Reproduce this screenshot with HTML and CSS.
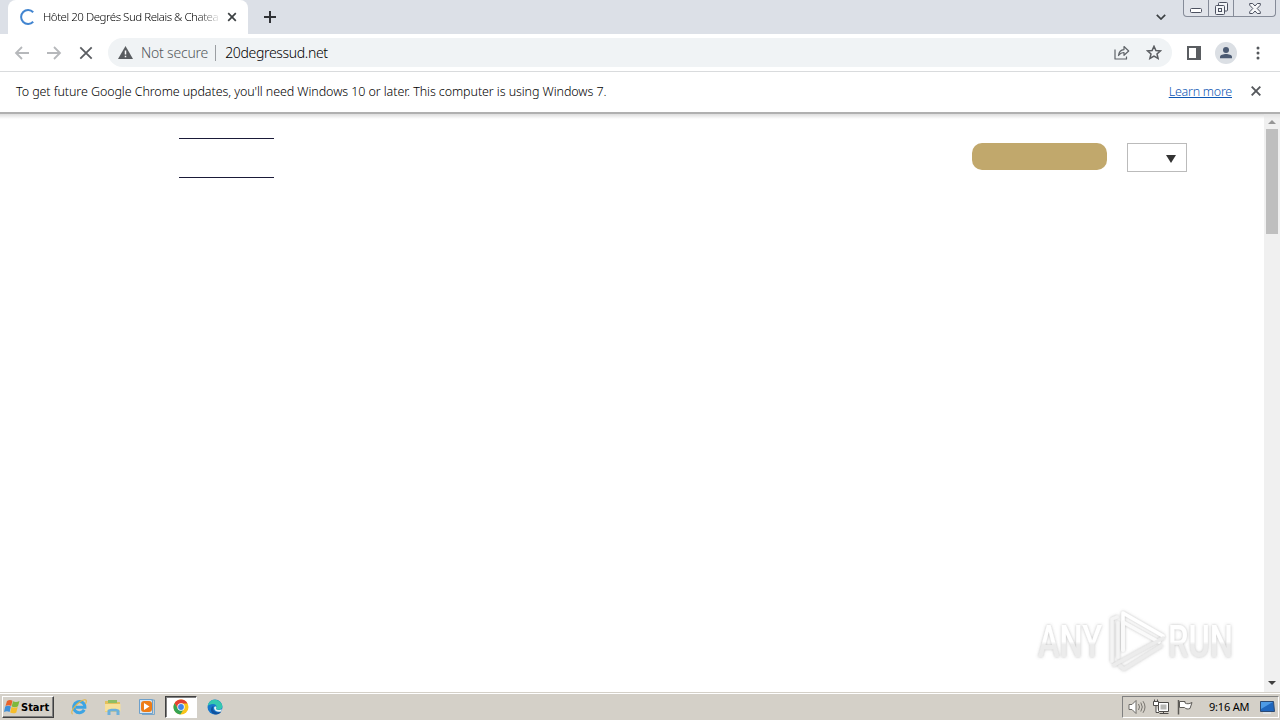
FILE: index.html
```html
<!DOCTYPE html>
<html lang="en">
<head>
    <meta charset="utf-8">
    <title>Hôtel 20 Degrés Sud Relais &amp; Chateaux</title>
    <link rel="stylesheet" href="styles.css">
</head>
<body>
    <div class="tabstrip">
        <div class="tab">
            <svg class="spinner" width="16" height="16" viewBox="0 0 16 16"><path d="M13.2 3.2A7 7 0 1 0 13.2 12.8" fill="none" stroke="#4285d0" stroke-width="2"/></svg>
            <span class="tab-title">Hôtel 20 Degrés Sud Relais &amp; Chatea</span>
            <svg class="tab-close" width="10" height="10" viewBox="0 0 10 10"><path d="M1.2 1.2l7.6 7.6M8.8 1.2L1.2 8.8" stroke="#3c4043" stroke-width="1.7"/></svg>
        </div>
        <svg class="new-tab" width="12" height="12" viewBox="0 0 12 12"><path d="M6 0v12M0 6h12" stroke="#303236" stroke-width="2"/></svg>
        <svg class="tab-search" width="10" height="6" viewBox="0 0 10 6"><path d="M.8.8L5 5 9.200.8" fill="none" stroke="#3c4043" stroke-width="1.7"/></svg>
        <div class="window-buttons">
            <span class="win-btn"><svg width="12" height="5" viewBox="0 0 12 5"><rect x=".5" y=".5" width="11" height="4" rx="1" fill="#fff" stroke="#4c5160"/></svg></span>
            <span class="win-btn"><svg width="13" height="13" viewBox="0 0 13 13"><g fill="#f2f4f7" stroke="#4c5160"><rect x="3.500" y=".5" width="9" height="8.500" rx="1"/><rect x=".5" y="3.500" width="9" height="9" rx="1"/><rect x="3.500" y="6.500" width="3" height="3"/></g></svg></span>
            <span class="win-btn wide"><svg width="12" height="11" viewBox="0 0 12 11"><path d="M.7.500h3L6 3 8.300.500h3v1.700L8.200 5.500l3.100 3.300v1.700h-3L6 8l-2.300 2.500h-3V8.800l3.100-3.300L.7 2.200z" fill="#f6f7f9" stroke="#4c5160"/></svg></span>
        </div>
    </div>

    <div class="toolbar">
        <svg class="nav" width="16" height="14" viewBox="0 0 16 14"><path d="M15 7H2M8 1L2 7l6 6" fill="none" stroke="#b6b8bb" stroke-width="1.8"/></svg>
        <svg class="nav" width="16" height="14" viewBox="0 0 16 14"><path d="M1 7h13M8 1l6 6-6 6" fill="none" stroke="#b6b8bb" stroke-width="1.8"/></svg>
        <svg class="nav" width="16" height="14" viewBox="0 0 16 14"><path d="M2.300 1.300l11.400 11.400M13.700 1.300L2.300 12.700" stroke="#5a5d61" stroke-width="1.8"/></svg>
        <div class="omnibox">
            <svg width="15" height="13" viewBox="0 0 15 13"><path d="M7.500 0L15 13H0z" fill="#5a5d61"/><path d="M7.500 4.500V8.500M7.500 9.700v1.600" stroke="#fff" stroke-width="1.500"/></svg>
            <span class="not-secure">Not secure</span>
            <span class="divider"></span>
            <span class="url">20degressud.net</span>
            <svg class="share" width="16" height="15" viewBox="0 0 16 15"><path d="M1 4.500V14h11.500V11.500M4.500 10.500C5 6.500 7 4.800 10 4.600V1.500l4.700 4.500L10 10.300V7.500C7.500 7.400 6 8.500 4.500 10.500z" fill="none" stroke="#5f6368" stroke-width="1.200" stroke-linejoin="round"/></svg>
            <svg class="star" width="16" height="15" viewBox="0 0 16 15"><path d="M8 1.300l1.900 4.200 4.600.400-3.500 3 1.100 4.500L8 11l-4.100 2.400L5 8.900l-3.500-3 4.600-.4z" fill="none" stroke="#5a5d61" stroke-width="1.500"/></svg>
        </div>
        <svg class="panel" width="14" height="14" viewBox="0 0 14 14"><path d="M1 1h12v12H1z" fill="#fff" stroke="#5a5d61" stroke-width="2"/><path d="M9 1h4v12H9z" fill="#5a5d61"/></svg>
        <svg class="avatar" width="22" height="22" viewBox="0 0 22 22"><circle cx="11" cy="11" r="11" fill="#dbdfe4"/><circle cx="11" cy="8" r="3" fill="#4b5a72"/><path d="M5 16.300v-1.500c0-2 3.500-2.900 6-2.900s6 .9 6 2.900v1.500z" fill="#4b5a72"/></svg>
        <svg class="menu" width="4" height="14" viewBox="0 0 4 14"><g fill="#55585c"><circle cx="2" cy="2" r="1.500"/><circle cx="2" cy="7" r="1.500"/><circle cx="2" cy="12" r="1.500"/></g></svg>
    </div>

    <div class="infobar">
        <span class="info-text">To get future Google Chrome updates, you'll need Windows 10 or later. This computer is using Windows 7.</span>
        <a class="learn-more">Learn more</a>
        <svg width="10" height="10" viewBox="0 0 10 10"><path d="M.7.700l8.600 8.600M9.300.700L.7 9.300" stroke="#55585c" stroke-width="1.900"/></svg>
    </div>

    <div class="viewport">
        <div class="page">
            <div class="site-header">
                <div class="logo-lines"></div>
                <div class="book-button"></div>
                <div class="lang-select"><span class="caret"></span></div>
            </div>
            <svg class="watermark" width="240" height="76" viewBox="0 0 240 76">
                <defs>
                    <linearGradient id="fade" x1="0" y1="0" x2="0" y2="1">
                        <stop offset=".5" stop-color="#fff"/>
                        <stop offset=".56" stop-color="#ececec"/>
                    </linearGradient>
                    <filter id="glow" x="-10%" y="-20%" width="120%" height="140%">
                        <feDropShadow dx="0" dy="0" stdDeviation="1.600" flood-color="#777" flood-opacity=".5"/>
                    </filter>
                </defs>
                <g filter="url(#glow)">
                    <g class="mark-text">
                        <text x="8" y="54" textLength="64" lengthAdjust="spacingAndGlyphs" fill="url(#fade)">ANY</text>
                        <text x="138" y="54" textLength="65" lengthAdjust="spacingAndGlyphs" fill="url(#fade)">RUN</text>
                    </g>
                    <g fill="none" stroke-width="3.500" stroke-linejoin="round" stroke-linecap="round">
                        <path d="M93 47V10l40 23" stroke="#fff"/>
                        <path d="M93 47V19l36 20" stroke="#fafafa"/>
                        <path d="M82 58V16l5-2M88 54V20" stroke="#f4f4f4"/>
                        <path d="M133 35L84 62M131 43L94 66l-4-3" stroke="#ececec"/>
                    </g>
                </g>
            </svg>
        </div>
        <div class="scrollbar">
            <span class="arrow-up"></span>
            <span class="thumb"></span>
            <span class="arrow-down"></span>
        </div>
    </div>

    <div class="taskbar">
        <div class="start">
            <svg width="17" height="16" viewBox="0 0 17 16"><path d="M3 2c2-1.300 4-1.200 5.500-.2L7.200 7C5.500 6 3.500 6 1.500 7z" fill="#e8622b"/><path d="M9 2.300c2 1 4 1 6.500-.3l-1.500 5.300c-2 1.200-4.500 1-6.300.1z" fill="#7eb83c"/><path d="M1.200 7.500c2-1 4-1 5.700 0l-1.300 5.500c-1.600-1-3.600-1-5.600 0z" fill="#3f8fd8"/><path d="M7.500 8c2 1 4 1 6.200.1l-1.400 5.400c-2 1.200-4.300 1-6.100 0z" fill="#f6bd2b"/></svg>
            <span class="start-label">Start</span>
        </div>
        <div class="tasks">
            <div class="task"><svg width="18" height="18" viewBox="0 0 18 18"><path d="M14.200 11.800A5.600 5.600 0 1 1 14.900 9.200H5.500" fill="none" stroke="#3da4e3" stroke-width="3"/><path d="M2.500 16.200C-1 14 8 3 14.500 1.700c2.500-.3 2 2.300 1 4" fill="none" stroke="#e0b64a" stroke-width="1.100"/></svg></div>
            <div class="task"><svg width="18" height="18" viewBox="0 0 18 18"><path d="M1 3h5l1 1h9v10H1z" fill="#e3c05c"/><path d="M4 2h9v3H4z" fill="#8ebd64"/><path d="M1 6h15.500v7.500H1z" fill="#f7e09a"/><path d="M3.500 17v-4.500c0-2.500 12-2.500 12 0V17h-3v-3.500h-6V17z" fill="#6bb0dc"/></svg></div>
            <div class="task"><svg width="18" height="18" viewBox="0 0 18 18"><path d="M1.500 1.500h13v14h-13z" fill="#d4e6f5" stroke="#6da0cb"/><path d="M13 2h3.500v14.500H4" fill="none" stroke="#79a7cb"/><rect x="3" y="3" width="11" height="11" rx="3" fill="#ee7d17"/><path d="M6 5l5.500 3.500L6 12z" fill="#fff"/></svg></div>
            <div class="task active"><svg width="16" height="16" viewBox="0 0 16 16"><circle cx="8" cy="8" r="7.500" fill="#f9c51b"/><path d="M1.500 4.200A7.500 7.500 0 0 1 14.500 4.500H8L4.900 9.800z" fill="#e34133"/><path d="M1.500 4.200A7.500 7.500 0 0 0 7.300 15.500L11 9.800 5 9.700z" fill="#35a353"/><circle cx="8" cy="8" r="3.700" fill="#fff"/><circle cx="8" cy="8" r="2.900" fill="#4285e8"/></svg></div>
            <div class="task"><svg width="16" height="16" viewBox="0 0 16 16"><circle cx="8" cy="8" r="7.500" fill="#1777cc"/><path d="M.7 7C2 .5 8-.5 12 2c4 2.500 4.500 7.500 1 8.500-2 .5-4 0-4-.8 1-1 1-4.700-3-4.700C3.500 5 1.500 6 .7 7z" fill="#35c8b0"/><path d="M6.500 7c-2 3 1 6.500 4.500 6.500 1.500 0 2.700-.5 3.500-1.200C12.500 16 8 16 6 14.500 3 12.500 3.500 8 6.500 7z" fill="#11529e"/><path d="M9 7.500c1 1-.5 2 .2 2.800 1 1 4 1.200 5.600-.3l-.5 2.200c-3.300 1.500-7-.2-7.300-3.200 0-1 .8-1.800 2-1.500z" fill="#e8f3f5"/></svg></div>
        </div>
        <div class="tray">
            <svg width="18" height="16" viewBox="0 0 18 16"><path d="M1 5.500h3l4-4v13l-4-4H1z" fill="#fff" stroke="#6d6b66"/><path d="M10.500 5q2 3 0 6M12.800 3.500q3 4.500 0 9M15 2.200q4 5.800 0 11.600" fill="none" stroke="#77746e"/></svg>
            <svg width="17" height="16" viewBox="0 0 17 16"><path d="M5.500 3.500h10v9h-10z" fill="#fff" stroke="#4d4b48"/><path d="M7.500 5.500h6v5h-6z" fill="#b7b7b4"/><path d="M6.500 14.500h9M10.500 12.500v2" stroke="#4d4b48"/><path d="M.500 2.500h5v4h-5zM1.500.500v2M4.500.500v2M3 6.500v7h3" fill="#fff" stroke="#4d4b48"/></svg>
            <svg width="17" height="16" viewBox="0 0 17 16"><path d="M1.500 1v14.500" stroke="#5c5a56" stroke-width="1.500"/><path d="M2.500 2.500h5.500v1.500c2 1.200 4 1 7-.5L13 9.500c-2 .8-4 .7-5.500-1h-5z" fill="#fff" stroke="#5c5a56"/></svg>
            <span class="clock">9:16 AM</span>
            <svg width="16" height="14" viewBox="0 0 16 14"><path d="M1.500 1.500h13l1 10H1.500z" fill="#1f66bd" stroke="#2c4a73"/><path d="M2 2h12L2 9z" fill="#4d9ae5"/><path d="M4 13h8" stroke="#dce7f0" stroke-width="1.500"/></svg>
        </div>
    </div>
</body>
</html>
```
FILE: styles.css
```css
* {
    margin: 0;
    padding: 0;
    box-sizing: border-box;
}

body {
    width: 1280px;
    height: 720px;
    overflow: hidden;
    display: flex;
    flex-direction: column;
    font-family: "Noto Sans", sans-serif;
    background: #fff;
}

svg {
    display: block;
    flex-shrink: 0;
}

.tabstrip {
    height: 34px;
    flex-shrink: 0;
    display: flex;
    background: #dce0e7;
    padding-left: 8px;
}

.tab {
    width: 240px;
    height: 34px;
    display: flex;
    align-items: center;
    padding-left: 12px;
    background: #fff;
    border-radius: 8px 8px 0 0;
}

.tab-title {
    width: 176px;
    margin-left: 7px;
    padding-bottom: 2px;
    white-space: nowrap;
    font-size: 11.5px;
    font-weight: 300;
    letter-spacing: -0.47px;
    color: #000;
    -webkit-mask-image: linear-gradient(to right, #000 155px, rgba(0, 0, 0, 0.1));
    mask-image: linear-gradient(to right, #000 155px, rgba(0, 0, 0, 0.1));
}

.tab-close {
    margin-left: 8px;
}

.new-tab {
    margin: 11px 0 0 16px;
}

.tab-search {
    margin: 14px 17px 0 auto;
}

.window-buttons {
    width: 93px;
    height: 17px;
    margin-right: 4px;
    display: flex;
    border: 1px solid #858b98;
    border-top: none;
    border-radius: 0 0 4px 4px;
    background: #e1e4ea;
}

.win-btn {
    width: 25px;
    display: flex;
    align-items: center;
    justify-content: center;
    border-right: 1px solid #858b98;
}

.win-btn:first-child {
    padding-top: 4px;
}

.win-btn.wide {
    flex: 1;
    border-right: none;
}

.toolbar {
    height: 38px;
    flex-shrink: 0;
    display: flex;
    align-items: center;
    padding-left: 14px;
    border-bottom: 1px solid #d9dbdd;
}

.nav {
    margin-right: 16px;
}

.omnibox {
    width: 1064px;
    height: 29px;
    margin-left: -2px;
    padding: 0 10px;
    display: flex;
    align-items: center;
    border-radius: 15px;
    background: #f0f3f5;
    font-size: 14px;
}

.not-secure {
    margin-left: 8px;
    color: #54585c;
    font-weight: 300;
    letter-spacing: -0.2px;
}

.divider {
    width: 1px;
    height: 16px;
    margin: 0 9px 0 7px;
    background: #9b9ea2;
}

.url {
    color: #000;
    font-weight: 300;
    letter-spacing: -0.33px;
}

.share {
    margin-left: auto;
}

.star {
    margin-left: 16px;
}

.panel {
    margin-left: 15px;
}

.avatar {
    margin-left: 14px;
}

.menu {
    margin-left: 19px;
}

.infobar {
    height: 42px;
    flex-shrink: 0;
    display: flex;
    align-items: center;
    padding: 0 19px 2px 16px;
    border-bottom: 2px solid #b0b0b0;
    font-size: 12.5px;
    font-weight: 300;
    color: #000;
}

.info-text {
    letter-spacing: -0.085px;
}

.learn-more {
    margin: 0 19px 0 auto;
    color: #0e57b4;
    letter-spacing: -0.25px;
    text-decoration: underline;
}

.viewport {
    flex: 1;
    display: flex;
    background: linear-gradient(#ddd, #fff 5px);
}

.page {
    flex: 1;
    position: relative;
}

.site-header {
    display: flex;
    align-items: flex-start;
    padding: 24px 77px 0 179px;
}

.logo-lines {
    width: 95px;
    height: 40px;
    border-top: 1px solid #1a1a38;
    border-bottom: 1px solid #1a1a38;
}

.book-button {
    width: 135px;
    height: 27px;
    margin: 5px 20px 0 auto;
    border-radius: 10px;
    background: #c1a86c;
}

.lang-select {
    width: 60px;
    height: 29px;
    margin-top: 5px;
    padding: 11px 0 0 38px;
    border: 1px solid #bbb;
}

.caret {
    display: block;
    width: 10px;
    height: 8px;
    background: #333;
    clip-path: polygon(0 0, 100% 0, 50% 100%);
}

.watermark {
    position: absolute;
    right: -6px;
    bottom: 13px;
}

.mark-text {
    font-family: Roboto, sans-serif;
    font-size: 45px;
    font-weight: 500;
}

.scrollbar {
    width: 16px;
    display: flex;
    flex-direction: column;
    align-items: center;
    padding: 6px 0 7px;
    background: rgba(230, 230, 230, 0.6);
}

.arrow-up,
.arrow-down {
    width: 8px;
    height: 4px;
    background: #969696;
    clip-path: polygon(50% 0, 100% 100%, 0 100%);
}

.thumb {
    width: 12px;
    height: 105px;
    margin-top: 5px;
    background: #bfbfbf;
}

.arrow-down {
    margin-top: auto;
    background: #404040;
    clip-path: polygon(0 0, 100% 0, 50% 100%);
}

.taskbar {
    height: 28px;
    flex-shrink: 0;
    display: flex;
    align-items: center;
    padding: 0 1px 0 2px;
    background: #d4d0c8;
    border-top: 1px solid #d4d0c8;
    box-shadow: inset 0 1px #fff;
    font-size: 11px;
}

.start {
    width: 52px;
    height: 22px;
    display: flex;
    align-items: center;
    padding-left: 1px;
    border: 1px solid;
    border-color: #fff #404040 #404040 #fff;
    box-shadow: inset -1px -1px #808080;
    font-family: "DejaVu Sans Condensed", "DejaVu Sans", sans-serif;
    font-weight: bold;
}

.start-label {
    padding-top: 2px;
}

.tasks {
    display: flex;
    margin-left: 9px;
    gap: 2px;
}

.task {
    width: 32px;
    height: 22px;
    display: flex;
    align-items: center;
    justify-content: center;
}

.task.active {
    border: 1px solid;
    border-color: #404040 #fff #fff #404040;
    box-shadow: inset 1px 1px #808080;
    background: #fff;
}

.tray {
    width: 157px;
    height: 22px;
    margin-left: auto;
    display: flex;
    align-items: center;
    gap: 7px;
    padding-left: 5px;
    border: 1px solid;
    border-color: #808080 #fff #fff #808080;
}

.clock {
    margin: 0 3px 0 8px;
    letter-spacing: -0.2px;
    white-space: nowrap;
}
```
